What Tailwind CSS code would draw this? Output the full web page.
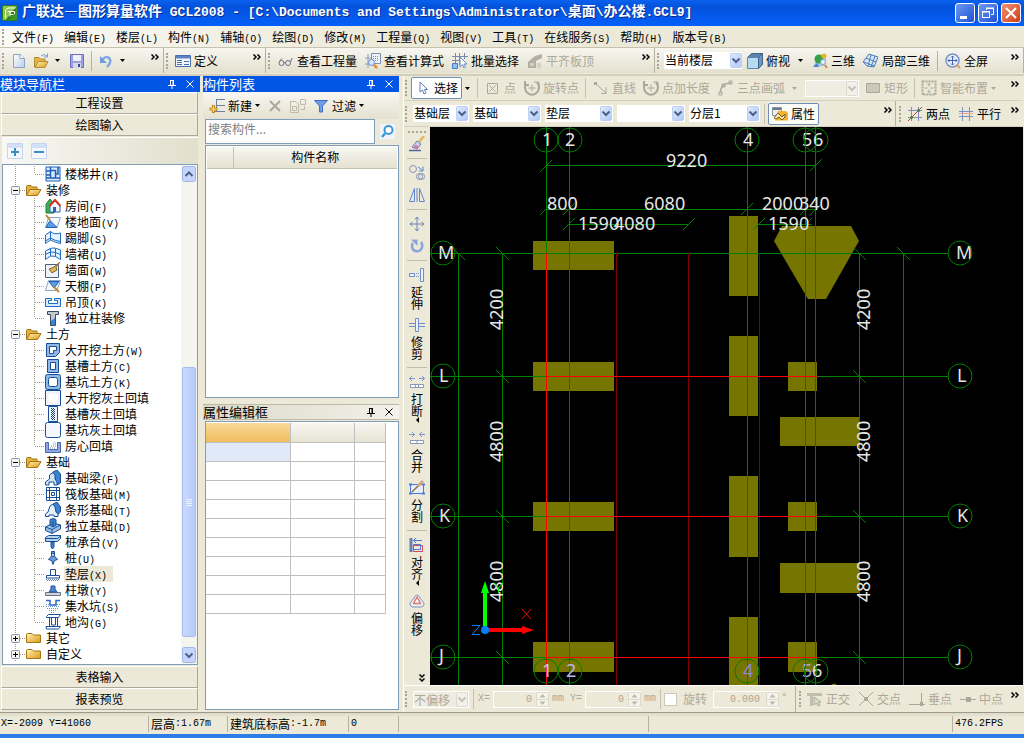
<!DOCTYPE html>
<html lang="zh-CN">
<head>
<meta charset="utf-8">
<title>广联达—图形算量软件 GCL2008</title>
<script src="https://cdn.jsdelivr.net/npm/@tailwindcss/browser@4"></script>
</head>
<body class="flex h-screen flex-col overflow-hidden bg-[#ece9d8] font-['Noto_Sans_CJK_SC',sans-serif] text-xs leading-4 whitespace-nowrap text-black [&_small]:font-['Liberation_Mono',monospace] [&_small]:text-[10px] [&_small]:leading-none [&_svg]:shrink-0">

<!-- Shared glyphs -->
<svg class="absolute size-0" aria-hidden="true">
  <defs>
    <linearGradient id="folderFill" x2="1" y2="1"><stop stop-color="#fff3b0"/><stop offset="1" stop-color="#d99a1c"/></linearGradient>
    <linearGradient id="paper" x2="1" y2="1"><stop stop-color="#fff"/><stop offset="1" stop-color="#b9cdea"/></linearGradient>
    <linearGradient id="arrowBox" y2="1" x2="1"><stop stop-color="#e1eafe"/><stop offset="1" stop-color="#aec8f7"/></linearGradient>
    <g id="branch" fill="none" stroke="#a09c84" stroke-dasharray="1 1"><path d="M15.500 0V16M34.500 0V16M35 8.500H45"/></g>
    <g id="branchEnd" fill="none" stroke="#a09c84" stroke-dasharray="1 1"><path d="M15.500 0V16M34.500 0V8M35 8.500H45"/></g>
    <g id="boxLine"><path d="M15.500 0V16M20 8.500H26" fill="none" stroke="#a09c84" stroke-dasharray="1 1"/><rect x="11.500" y="4.500" width="8" height="8" rx="1" fill="#f6f5ef" stroke="#7898b5"/><path d="M13 8.500H18" stroke="#000"/></g>
    <g id="folderOpen"><path d="M29.500 13V4.500q0-1 1-1H34l1.500 1.500H40v3" fill="#e0b040" stroke="#a87412"/><path d="M29.500 13.500 33 7.500H44L40.500 13.500Z" fill="url(#folderFill)" stroke="#a87412"/></g>
    <g id="folderShut"><path d="M29.500 12.500V4.500q0-1 1-1H35l1.500 1.500H43.500V12.500Z" fill="url(#folderFill)" stroke="#a87412"/></g>
    <g id="nodeOpen"><use href="#boxLine"/><use href="#folderOpen" x="-3"/></g>
    <g id="nodeShut"><use href="#boxLine"/><path d="M15.500 6V11" stroke="#000"/><use href="#folderShut" x="-3"/></g>
    <g id="caret"><path d="M0 0H5L2.500 3Z" fill="currentColor"/></g>
    <g id="more" fill="none" stroke="currentColor" stroke-width="1.500"><path d="M0.500 0.500 3 3 0.500 5.500M4.500 0.500 7 3 4.500 5.500"/></g>
    <g id="drop"><rect x="0.500" y="0.500" width="11" height="14" rx="1" fill="url(#arrowBox)" stroke="#bccff5"/><path d="M2.500 5.500 6 9 9.500 5.500" fill="none" stroke="#4d6185" stroke-width="2"/></g>
    <g id="dropOff"><rect x="0.500" y="0.500" width="11" height="14" rx="1" fill="#f2f1ea" stroke="#dddacb"/><path d="M2.500 5.500 6 9 9.500 5.500" fill="none" stroke="#c5c2b2" stroke-width="2"/></g>
    <g id="spin"><path d="M0.500 0.500H12.500V14.500H0.500ZM0.500 7.500H12.500" fill="#f4f3ec" stroke="#dddacb"/><path d="M3.500 5.500 6.500 2 9.500 5.500ZM3.500 9.500 6.500 13 9.500 9.500Z" fill="#bdbaa9"/></g>
    <g id="pin" fill="none" stroke="currentColor"><path d="M2 0.500H6M2.500 0V5M5.500 0V5M0 5.500H8M4 6V9"/><path d="M5 0V5"/></g>
    <g id="cross" stroke="currentColor"><path d="M0.500 0.500 7.500 7.500M7.500 0.500 0.500 7.500"/></g>
  </defs>
</svg>

<!-- Title bar -->
<header class="flex h-[26px] items-center bg-linear-to-b from-[#0a62ee] via-[#0452dc] via-25% to-[#0460fa] pr-[3px] pl-[2px] text-white">
  <svg class="size-4" viewBox="0 0 16 16"><rect width="16" height="16" rx="2" fill="#2f7a1c"/><path d="M1 1H15L9 8 4 15H1Z" fill="#8cc850"/><path d="M15 1V15H6Q13 10 15 1Z" fill="#3f9428"/><path d="M3.500 13V5L6 3H13.500M5.500 6.500H12.500V9M8 6V9.500H11.500M8 9V11.500" fill="none" stroke="#fff"/></svg>
  <h1 class="ml-1 flex-1 pb-[3px] font-['Liberation_Mono','Noto_Sans_CJK_SC',monospace] text-[13px] leading-5 font-bold [text-shadow:1px_1px_0_#0a2a8c]"><span class="font-['Noto_Sans_CJK_SC'] text-sm">广联达—图形算量软件</span> GCL2008 - [C:\Documents and Settings\Administrator\<span class="text-sm">桌面</span>\<span class="text-sm">办公楼</span>.GCL9]</h1>
  <div class="flex gap-[3px] [&>button]:size-5 [&>button]:rounded-[3px] [&>button]:border [&>button]:border-white [&_svg]:size-[18px]">
    <button aria-label="最小化" class="bg-linear-to-br from-[#6f98f2] to-[#1c4fd6]"><svg viewBox="0 0 18 18"><path d="M4 12H11V15H4Z" fill="#fff"/></svg></button>
    <button aria-label="还原" class="bg-linear-to-br from-[#6f98f2] to-[#1c4fd6]"><svg viewBox="0 0 18 18" fill="none" stroke="#fff"><path d="M7.500 6V4.500H14.500V10.500H12M7 4H15M3.500 7.500H10.500V13.500H3.500ZM3 8H11"/></svg></button>
    <button aria-label="关闭" class="bg-linear-to-br from-[#ee8f70] to-[#cf3a12]"><svg viewBox="0 0 18 18" fill="none" stroke="#fff" stroke-width="2"><path d="M4 4 14 14M14 4 4 14"/></svg></button>
  </div>
</header>

<!-- Menu bar -->
<nav class="flex h-[22px] items-center gap-[10px] border-b border-[#c5c2b0] bg-linear-to-r from-[#faf9f5] to-[#ece9d8] to-40% pl-[2px]">
  <span class="-mr-[2px] h-4 border-l-2 border-dotted border-[#a8a797]"></span>
  <button>文件<small>(F)</small></button><button>编辑<small>(E)</small></button><button>楼层<small>(L)</small></button><button>构件<small>(N)</small></button><button>辅轴<small>(O)</small></button><button>绘图<small>(D)</small></button><button>修改<small>(M)</small></button><button>工程量<small>(Q)</small></button><button>视图<small>(V)</small></button><button>工具<small>(T)</small></button><button>在线服务<small>(S)</small></button><button>帮助<small>(H)</small></button><button>版本号<small>(B)</small></button>
</nav>

<!-- Main toolbar -->
<div class="flex h-7 border-b-2 border-b-[#d2cfbe] pb-px [&_button]:flex [&_button]:items-center [&_button]:gap-[3px] [&>div]:flex [&>div]:items-center [&>div]:border-r [&>div]:border-[#b5b2a0] [&>div]:bg-linear-to-b [&>div]:from-[#f7f6f0] [&>div]:to-[#e4e1cf] [&>div]:pl-[2px]">
  <div class="w-[164px] pr-1">
    <span class="mr-[7px] h-4 border-l-2 border-dotted border-[#a8a797]"></span>
    <button aria-label="新建"><svg class="size-4" viewBox="0 0 16 16"><path d="M2.500 1.500H9L13.500 5.500V14.500H2.500Z" fill="url(#paper)" stroke="#8fa4c4"/><path d="M9 1.500V5.500H13.500" fill="#fff" stroke="#8fa4c4"/></svg></button>
    <button aria-label="打开" class="ml-[6px]"><svg class="size-4" viewBox="0 0 16 16"><path d="M1.500 14V4.500H6L7.500 6H12V8" fill="#e5b64c" stroke="#b68a2a"/><path d="M2 14.500 5 8.500H15L12 14.500Z" fill="url(#folderFill)" stroke="#b68a2a"/><path d="M8 3Q11 0 14 3M14.500 0.500V4H11" fill="none" stroke="#7e9ac6"/></svg><svg class="ml-[3px] h-[3px] w-[5px]"><use href="#caret"/></svg></button>
    <button aria-label="保存" class="ml-[9px]"><svg class="size-4" viewBox="0 0 16 16"><path d="M1.500 1.500H14.500V14.500H1.500Z" fill="#9aa0e0" stroke="#6a72c0"/><path d="M4 2H12V8H4Z" fill="#eef1fc"/><path d="M4 10H12V15H4Z" fill="#d6d8e6"/><path d="M9 11H11V14H9Z" fill="#404890"/></svg></button>
    <span class="mx-[6px] h-5 w-px bg-[#b5b2a0]"></span>
    <button aria-label="撤销"><svg class="size-4" viewBox="0 0 16 16"><path d="M4 7Q8 2 11.500 5.500Q14 9 9 14" fill="none" stroke="#7fa8e6" stroke-width="2.500"/><path d="M2 3V10H9Z" fill="#6f9be0"/></svg><svg class="ml-[3px] h-[3px] w-[5px]"><use href="#caret"/></svg></button>
    <button aria-label="更多" class="mb-2 ml-auto"><svg class="h-[6px] w-2"><use href="#more"/></svg></button>
  </div>
  <div class="w-[102px] pr-1">
    <span class="mr-[7px] h-4 border-l-2 border-dotted border-[#a8a797]"></span>
    <button><svg class="size-4" viewBox="0 0 16 16"><path d="M0.500 2.500H15.500V13.500H0.500Z" fill="#f3f7fd" stroke="#4a6fae"/><path d="M1 3H15V5.500H1Z" fill="#5c83c6"/><path d="M2 7.500H7M2 9.500H7M2 11.500H7M9 8.500H14M9 11.500H14" stroke="#4a6fae"/></svg>定义</button>
    <button aria-label="更多" class="mb-2 ml-auto"><svg class="h-[6px] w-2"><use href="#more"/></svg></button>
  </div>
  <div class="w-[389px] gap-[8px] pr-1">
    <span class="h-4 border-l-2 border-dotted border-[#a8a797]"></span>
    <button><svg class="size-4" viewBox="0 0 16 16" fill="none" stroke="#66708a"><circle cx="3.500" cy="10" r="2.500"/><circle cx="10" cy="10" r="2.500"/><path d="M6 9.500H7.500M1.500 8.500 4 5.500M12.500 9 14 5"/></svg>查看工程量</button>
    <button><svg class="size-4" viewBox="0 0 16 16"><path d="M0 5H7M0 11H6M3 1V15" stroke="#8a9cbc"/><path d="M6.500 0.500H15.500V10.500H6.500Z" fill="#eef2fa" stroke="#7d8fb0"/><path d="M8 3.500H14M8 5.500H14M8 7.500H14" stroke="#7d8fb0" stroke-dasharray="1 1"/><circle cx="6.500" cy="9.500" r="3" fill="#d5e6fb" stroke="#6b8cc4"/><path d="M9 12 12 15" stroke="#e09030" stroke-width="2.500"/></svg>查看计算式</button>
    <button><svg class="size-4" viewBox="0 0 16 16"><path d="M0 3.500H16M0 7.500H11M3.500 0V16M7.500 0V12M12.500 0V6" stroke="#7b8aa6"/><path d="M0.500 10.500H5.500V15.500H0.500Z" fill="#8cc0f4" stroke="#4b7cc0"/><path d="M8 4V14L10.500 11.500 12 15 13.500 14 12 11H15Z" fill="#fff" stroke="#6b8cc4"/></svg>批量选择</button>
    <button disabled class="text-[#aca899]"><svg class="size-4" viewBox="0 0 16 16"><path d="M1 9 8 3 15 1V5L9 8V15H1Z" fill="#b3b0a2"/><path d="M3 10H7V13H3ZM10 10H14V15H10Z" fill="#d4d1c3"/></svg>平齐板顶</button>
    <button aria-label="更多" class="mb-2 ml-auto"><svg class="h-[6px] w-2"><use href="#more"/></svg></button>
  </div>
  <div class="min-w-0 flex-1 pr-1">
    <span class="mr-[5px] h-4 border-l-2 border-dotted border-[#a8a797]"></span>
    <span class="relative flex w-[78px]"><select aria-label="楼层范围" class="h-[17px] w-full appearance-none bg-white pb-px pl-px"><option>当前楼层</option></select><svg class="pointer-events-none absolute top-px right-0 h-[15px] w-3"><use href="#drop"/></svg></span>
    <button class="ml-[5px]"><svg class="size-4" viewBox="0 0 16 16"><path d="M0.500 4.500 4.500 0.500H15.500L11.500 4.500Z" fill="#5f82aa" stroke="#41658f"/><path d="M0.500 4.500H11.500V15.500H0.500Z" fill="#b7daf2" stroke="#5f87b0"/><path d="M11.500 4.500 15.500 0.500V11.500L11.500 15.500Z" fill="#6c95bf" stroke="#41658f"/></svg>俯视<svg class="ml-[5px] h-[3px] w-[5px]"><use href="#caret"/></svg></button>
    <button class="ml-[9px]"><svg class="size-4" viewBox="0 0 16 16"><path d="M1 14 4 7 14 5 13 13Z" fill="#a9c3dc"/><circle cx="7" cy="6" r="4.500" fill="#35a045"/><circle cx="12" cy="3" r="2.500" fill="#e3b62b"/><path d="M1 14H7L5 10Z" fill="#4b83d8"/><circle cx="11" cy="9" r="2.500" fill="#e9f3fb" stroke="#7fa5c8"/><path d="M13 12 15 15" stroke="#d88b30" stroke-width="2"/></svg>三维</button>
    <button class="ml-2"><svg class="size-4" viewBox="0 0 16 16"><path d="M0 9 6 1 15 4 11 14 4 13Z" fill="#d6e6f5" stroke="#4e7db4"/><path d="M3 5 13 9M8 2 5 13M12 3 8 14M1 9 11 13" stroke="#4e7db4"/></svg>局部三维</button>
    <span class="mx-[7px] h-5 w-px bg-[#b5b2a0]"></span>
    <button><svg class="size-4" viewBox="0 0 16 16"><circle cx="7.500" cy="7.500" r="6.500" fill="#e8effa" stroke="#7e95c2" stroke-width="1.500"/><path d="M7.500 3V12M3 7.500H12M6 4.500 7.500 3 9 4.500M6 10.500 7.500 12 9 10.500M4.500 6 3 7.500 4.500 9M10.500 6 12 7.500 10.500 9" fill="none" stroke="#4468b0"/><path d="M12 12 15 15" stroke="#e0a050" stroke-width="2"/></svg>全屏</button>
    <button aria-label="更多" class="mb-2 ml-auto"><svg class="h-[6px] w-2"><use href="#more"/></svg></button>
  </div>
</div>

<main class="flex min-h-0 flex-1">

  <!-- Module navigator -->
  <aside class="mr-[3px] flex w-[200px] flex-col">
    <h2 class="flex h-4 items-center bg-[#0355e6] pr-[6px] text-[13px] text-white"><span class="flex-1">模块导航栏</span>
      <button aria-label="固定"><svg class="block h-[9px] w-2"><use href="#pin"/></svg></button><button aria-label="关闭导航栏" class="ml-[10px]"><svg class="block size-2"><use href="#cross"/></svg></button></h2>
    <div class="flex min-h-0 flex-1 flex-col pr-[2px] pb-[2px] pl-px [&>button]:h-[22px] [&>button]:shrink-0 [&>button]:border [&>button]:border-[#aca899] [&>button]:border-t-white [&>button]:border-l-white">
      <button>工程设置</button>
      <button>绘图输入</button>
      <div class="mt-px ml-px flex h-[27px] shrink-0 items-center gap-2 border-t border-white bg-linear-to-r from-[#f8f8f5] to-[#e2dfcc] pl-[5px]">
        <button aria-label="全部展开"><svg class="block size-4" viewBox="0 0 16 16"><path d="M0.500 0.500H15.500V15.500H0.500Z" fill="#f4f7fc" stroke="#c6d6f2"/><path d="M1 1H15V5H1Z" fill="#d4e0f8"/><path d="M8 5V13M4 9H12" stroke="#3b8dc0" stroke-width="2"/></svg></button>
        <button aria-label="全部折叠"><svg class="block size-4" viewBox="0 0 16 16"><path d="M0.500 0.500H15.500V15.500H0.500Z" fill="#f4f7fc" stroke="#c6d6f2"/><path d="M1 1H15V5H1Z" fill="#d4e0f8"/><path d="M3 9H13" stroke="#3b8dc0" stroke-width="2"/></svg></button>
      </div>
      <div class="ml-px flex min-h-0 flex-1 border border-[#7f9db9] bg-white">
        <ul class="min-w-0 flex-1 overflow-hidden pt-px [&_li]:flex [&_li]:h-4 [&_li]:items-center [&_li>svg]:size-4 [&_li>svg:first-child]:w-[42px] [&_a]:ml-[3px] [&_a]:px-px">
          <li><svg viewBox="3 0 42 16"><use href="#branchEnd"/></svg><svg viewBox="0 0 16 16"><path d="M1 1H15V15H1Z" fill="#dbe9fb" stroke="#1b5fb8"/><path d="M1 5H5M1 9H5M1 12H15M5.500 1V12M10.500 4V12M10.500 4.500H5M13 1V8H10" fill="none" stroke="#1b5fb8" stroke-width="1.500"/></svg><a href="#">楼梯井<small>(R)</small></a></li>
          <li><svg viewBox="3 0 42 16"><use href="#nodeOpen"/></svg><a href="#" class="ml-0!">装修</a></li>
          <li><svg viewBox="3 0 42 16"><use href="#branch"/></svg><svg viewBox="0 0 16 16"><path d="M1 6 5 1 9 6V15H1Z" fill="#3fae5c" stroke="#1d7c3a"/><path d="M5 8 10 3 15 8V14H5Z" fill="#f2f7ff" stroke="#2a66b0"/><path d="M4.500 8 10 2 15.500 8" fill="none" stroke="#d53320" stroke-width="2"/><path d="M8 9H11V14H8Z" fill="#2a66b0"/></svg><a href="#">房间<small>(F)</small></a></li>
          <li><svg viewBox="3 0 42 16"><use href="#branch"/></svg><svg viewBox="0 0 16 16"><path d="M3.500 3.500H15.500L12 13.500H0.500Z" fill="#f4f8fd" stroke="#8ba6c4"/><path d="M5 6.500 12 13.500H1Z" fill="#5c9ce4" stroke="#1b5fb8"/><path d="M1 1 5 6" stroke="#c48a2a" stroke-width="2"/></svg><a href="#">楼地面<small>(V)</small></a></li>
          <li><svg viewBox="3 0 42 16"><use href="#branch"/></svg><svg viewBox="0 0 16 16" fill="#e6f2fd" stroke="#1b6cc4"><path d="M0.500 5 5.500 1.500V10L0.500 13.500ZM5.500 1.500Q9 5 15.500 3V13.500Q10 12.500 5.500 10Z"/><path d="M0.500 11 5.500 8Q10 11 15.500 11.500" fill="none"/></svg><a href="#">踢脚<small>(S)</small></a></li>
          <li><svg viewBox="3 0 42 16"><use href="#branch"/></svg><svg viewBox="0 0 16 16" fill="#e6f2fd" stroke="#1b6cc4"><path d="M0.500 5 5.500 2.500V10L0.500 13.500ZM5.500 2.500Q9 1 15.500 4V13.500Q10 9 5.500 10Z"/><path d="M0.500 8.500 5.500 6Q10 5.500 15.500 8.500M10.500 2.500V10.500" fill="none"/></svg><a href="#">墙裙<small>(U)</small></a></li>
          <li><svg viewBox="3 0 42 16"><use href="#branch"/></svg><svg viewBox="0 0 16 16"><path d="M0.500 2.500H13.500V15.500H0.500Z" fill="#f0f4fa" stroke="#4a6288"/><path d="M15 0 11 5 12 8 7 11 4 7 9 5Z" fill="#d9b560" stroke="#8a6420"/></svg><a href="#">墙面<small>(W)</small></a></li>
          <li><svg viewBox="3 0 42 16"><use href="#branch"/></svg><svg viewBox="0 0 16 16"><path d="M3.500 2.500H15.500L12 12.500H0.500Z" fill="#f4f8fd" stroke="#8ba6c4"/><path d="M4 3.500H14L9 10Z" fill="#5c9ce4" stroke="#1b5fb8"/><path d="M9 9 14 14" stroke="#c48a2a" stroke-width="2"/></svg><a href="#">天棚<small>(P)</small></a></li>
          <li><svg viewBox="3 0 42 16"><use href="#branch"/></svg><svg viewBox="0 0 16 16"><path d="M0.500 4.500H6.500V6.500H3.500V9.500H12.500V6.500H9.500V4.500H15.500V12.500H0.500Z" fill="#d8eafb" stroke="#1b6cc4"/></svg><a href="#">吊顶<small>(K)</small></a></li>
          <li><svg viewBox="3 0 42 16"><use href="#branchEnd"/></svg><svg viewBox="0 0 16 16"><path d="M2.500 1.500H13.500V4.500H10.500V15.500H5.500V4.500H2.500Z" fill="#c3c8d0" stroke="#3e4b5e"/><path d="M6 15 6 11 10 8V15Z" fill="#3b82d8"/></svg><a href="#">独立柱装修</a></li>
          <li><svg viewBox="3 0 42 16"><use href="#nodeOpen"/></svg><a href="#" class="ml-0!">土方</a></li>
          <li><svg viewBox="3 0 42 16"><use href="#branch"/></svg><svg viewBox="0 0 16 16" stroke="#174f96"><path d="M1.500 1.500H14.500V10.500L10.500 14.500H1.500Z" fill="#8fb8e6"/><path d="M4.500 4.500H11.500V8.500H8.500V11.500H4.500Z" fill="#fff"/></svg><a href="#">大开挖土方<small>(W)</small></a></li>
          <li><svg viewBox="3 0 42 16"><use href="#branch"/></svg><svg viewBox="0 0 16 16" stroke="#174f96"><path d="M2.500 1.500H13.500V14.500H2.500Z" fill="#8fb8e6"/><path d="M5.500 4.500H10.500V11.500H5.500Z" fill="#fff"/></svg><a href="#">基槽土方<small>(C)</small></a></li>
          <li><svg viewBox="3 0 42 16"><use href="#branch"/></svg><svg viewBox="0 0 16 16" stroke="#174f96"><rect x="0.500" y="0.500" width="15" height="15" rx="2" fill="#8fb8e6"/><rect x="3.500" y="3.500" width="9" height="9" rx="2" fill="#fff"/></svg><a href="#">基坑土方<small>(K)</small></a></li>
          <li><svg viewBox="3 0 42 16"><use href="#branch"/></svg><svg viewBox="0 0 16 16" stroke="#174f96"><path d="M0.500 0.500H15.500V15.500H0.500Z" fill="#f1f5ff"/><path d="M3 3H13V13H3Z" fill="#fff" stroke="#dbe4f8" stroke-dasharray="1 1"/></svg><a href="#">大开挖灰土回填</a></li>
          <li><svg viewBox="3 0 42 16"><use href="#branch"/></svg><svg viewBox="0 0 16 16"><path d="M3.500 0.500H12.500V15.500H3.500Z" fill="#eef3fb" stroke="#174f96"/><path d="M6.500 2V14M7.500 3V15M8.500 2V14M9.500 3V15" stroke="#20406c" stroke-dasharray="1 1"/></svg><a href="#">基槽灰土回填</a></li>
          <li><svg viewBox="3 0 42 16"><use href="#branch"/></svg><svg viewBox="0 0 16 16"><rect x="0.500" y="0.500" width="15" height="15" rx="2" fill="#f4f7ff" stroke="#174f96"/></svg><a href="#">基坑灰土回填</a></li>
          <li><svg viewBox="3 0 42 16"><use href="#branchEnd"/></svg><svg viewBox="0 0 16 16"><path d="M0.500 4.500H3.500V11.500H12.500V4.500H15.500V14.500H0.500Z" fill="#8da6dc" stroke="#4a67b0"/><path d="M5 10H11M6 8H11M8 6H11M9 4H11" stroke="#7e93bc" stroke-dasharray="1 1"/></svg><a href="#">房心回填</a></li>
          <li><svg viewBox="3 0 42 16"><use href="#nodeOpen"/></svg><a href="#" class="ml-0!">基础</a></li>
          <li><svg viewBox="3 0 42 16"><use href="#branch"/></svg><svg viewBox="0 0 16 16" stroke="#174f96"><path d="M8 2 12 0 15.500 4V13L12 15Z" fill="#3c82cc"/><path d="M0.500 15V12L4.500 9V5L8 2.500 10 5V9L12 12V15H9V12H4V15Z" fill="#cfe2f6"/></svg><a href="#">基础梁<small>(F)</small></a></li>
          <li><svg viewBox="3 0 42 16"><use href="#branch"/></svg><svg viewBox="0 0 16 16" fill="none" stroke="#174f96"><path d="M1.500 1.500H14.500V14.500H1.500ZM4.500 1V15M11.500 1V15M1 4.500H15M1 11.500H15M6.500 6.500H9.500V9.500H6.500Z"/></svg><a href="#">筏板基础<small>(M)</small></a></li>
          <li><svg viewBox="3 0 42 16"><use href="#branch"/></svg><svg viewBox="0 0 16 16" stroke="#174f96"><path d="M8 2 12 0 15.500 5V10L12 13Z" fill="#3c82cc"/><path d="M0.500 14.500V12L3 10 5 4 8 2 10 5 11 10 13 12V14.500H9V13H4V14.500Z" fill="#e5f0fb"/></svg><a href="#">条形基础<small>(T)</small></a></li>
          <li><svg viewBox="3 0 42 16"><use href="#branch"/></svg><svg viewBox="0 0 16 16" stroke="#174f96"><path d="M0.500 9 8 5 15.500 7V11L7 15.500 0.500 12.500Z" fill="#9cc0e8"/><path d="M0.500 9 7 11.500 15.500 7M7 11.500V15" fill="none"/><path d="M5 1.500 8 0.500 11 1.500V7L8 9 5 7ZM8 3V9" fill="#3c82cc"/></svg><a href="#">独立基础<small>(D)</small></a></li>
          <li><svg viewBox="3 0 42 16"><use href="#branch"/></svg><svg viewBox="0 0 16 16" stroke="#174f96"><path d="M0.500 3.500 3.500 1.500H15.500V4.500L12.500 7.500H0.500Z" fill="#b8d3f0"/><path d="M0.500 4.500H12.500L15.500 2" fill="none"/><path d="M6 8H9V13L7.500 15 6 13Z" fill="#3c82cc"/></svg><a href="#">桩承台<small>(V)</small></a></li>
          <li><svg viewBox="3 0 42 16"><use href="#branch"/></svg><svg viewBox="0 0 16 16" stroke="#174f96"><path d="M6.500 1.500H9.500V6L12.500 9.500 9.500 10.500 8 14.500 6.500 10.500 3.500 9.500 6.500 6Z" fill="#6a9bd4"/><circle cx="8" cy="5" r="1.500" fill="#fff"/></svg><a href="#">桩<small>(U)</small></a></li>
          <li><svg viewBox="3 0 42 16"><use href="#branch"/></svg><svg viewBox="0 0 16 16"><path d="M5.500 9V3.500H10.500V9M1.500 12V9.500H14.500V12" fill="#fff" stroke="#174f96"/><path d="M1 12H15" stroke="#174f96"/><path d="M1 13.500H15M2 14.500H14" stroke="#7388a8" stroke-dasharray="1 1"/></svg><a href="#" class="bg-[#ece9d8] pr-[6px]!">垫层<small>(X)</small></a></li>
          <li><svg viewBox="3 0 42 16"><use href="#branch"/></svg><svg viewBox="0 0 16 16"><path d="M0.500 10.500H15.500V13.500H0.500Z" fill="#d0d3da" stroke="#6b7280"/><path d="M4 10 6 7V4H10V7L12 10Z" fill="#4c86d8" stroke="#2a4fa0"/></svg><a href="#">柱墩<small>(Y)</small></a></li>
          <li><svg viewBox="3 0 42 16"><use href="#branch"/></svg><svg viewBox="0 0 16 16"><path d="M1 2.500H5V7H11V2.500H15" fill="none" stroke="#2a6cc4" stroke-width="1.500"/><path d="M1 6.500H4M12 6.500H15M1 8.500H15M2 10.500H14M4 12.500H12M6 14.500H10" stroke="#6a94d0" stroke-dasharray="1 1"/></svg><a href="#">集水坑<small>(S)</small></a></li>
          <li><svg viewBox="3 0 42 16"><use href="#branchEnd"/></svg><svg viewBox="0 0 16 16" fill="none" stroke="#174f96"><path d="M1.500 2.500 3.500 0.500H15.500L13.500 3.500H1.500ZM4.500 4V13M12.500 4V13M6.500 4V11H10.500V4M1 12.500H15.500L13.500 15H1.500Z"/></svg><a href="#">地沟<small>(G)</small></a></li>
          <li><svg viewBox="3 0 42 16"><use href="#nodeShut"/></svg><a href="#" class="ml-0!">其它</a></li>
          <li><svg viewBox="3 0 42 16"><use href="#nodeShut"/></svg><a href="#" class="ml-0!">自定义</a></li>
        </ul>
        <div class="flex w-4 flex-col items-center bg-[#f5f5f0] py-px" aria-hidden="true">
          <svg class="size-4" viewBox="0 0 16 16"><rect x="1.500" y="0.500" width="13" height="15" rx="2" fill="#c6d5fd" stroke="#9fb5e8"/><path d="M4.500 10 8 6.500 11.500 10" fill="none" stroke="#4d6185" stroke-width="2"/></svg>
          <span class="h-[185px]"></span>
          <span class="flex min-h-0 w-[14px] flex-1 flex-col items-center justify-center gap-px rounded-xs border border-[#a9bdec] bg-linear-to-r from-[#c9d8fd] to-[#b7cafa] [&>i]:h-px [&>i]:w-[6px] [&>i]:bg-[#eef4fe]"><i></i><i></i><i></i><i></i></span>
          <span class="h-[10px]"></span>
          <svg class="size-4" viewBox="0 0 16 16"><rect x="1.500" y="0.500" width="13" height="15" rx="2" fill="#c6d5fd" stroke="#9fb5e8"/><path d="M4.500 6.500 8 10 11.500 6.500" fill="none" stroke="#4d6185" stroke-width="2"/></svg>
        </div>
      </div>
      <button class="mt-px">表格输入</button>
      <button>报表预览</button>
    </div>
  </aside>

  <!-- Component list and property editor -->
  <section class="flex w-[200px] flex-col pr-1">
    <h2 class="flex h-4 items-center bg-[#0355e6] pr-[6px] text-[13px] text-white"><span class="flex-1">构件列表</span>
      <button aria-label="固定"><svg class="block h-[9px] w-2"><use href="#pin"/></svg></button><button aria-label="关闭构件列表" class="ml-[10px]"><svg class="block size-2"><use href="#cross"/></svg></button></h2>
    <div class="flex h-[27px] items-center bg-linear-to-b from-[#f8f7f2] to-[#e4e1cf] pl-[6px] [&>button]:flex [&>button]:items-center [&>button]:gap-[3px]">
      <button><svg class="size-4" viewBox="0 0 16 16"><path d="M7 1.500H16M7 7.500H16M5 13.500H16M7.500 1V13" fill="none" stroke="#6b7f9e"/><path d="M4.500 7V15M0.500 11H8.500" stroke="#c58a1a" stroke-width="3"/><path d="M4.500 8V14M1.500 11H7.500" stroke="#fbe08a"/></svg>新建<svg class="h-[3px] w-[5px]"><use href="#caret"/></svg></button>
      <button aria-label="删除" disabled class="ml-2 text-[#aca899]"><svg class="size-[14px]" viewBox="0 0 14 14"><path d="M2 2 12 12M12 2 2 12" stroke="currentColor" stroke-width="2"/></svg></button>
      <button aria-label="复制" disabled class="ml-2 text-[#bdbaa9]"><svg class="size-4" viewBox="0 0 16 16" fill="none" stroke="currentColor"><path d="M0.500 3.500H6L8.500 6V14.500H0.500ZM2.500 8.500H6.500V12.500H2.500ZM10.500 1.500H15.500V6.500H10.500ZM14.500 8V11.500H10.500"/></svg></button>
      <button class="ml-2"><svg class="size-[14px]" viewBox="0 0 14 14"><path d="M0.500 1.500H13.500L8.500 7V13H5.500V7Z" fill="#6f9ee8" stroke="#3f6fc4"/></svg><span class="ml-px">过滤</span><svg class="h-[3px] w-[5px]"><use href="#caret"/></svg></button>
    </div>
    <div class="ml-[2px] flex h-[25px] gap-[5px]">
      <input aria-label="搜索构件" placeholder="搜索构件..." class="min-w-0 flex-1 border border-[#7f9db9] bg-white px-[2px] pb-[5px] placeholder:text-[#808080]">
      <button aria-label="搜索" class="my-auto mr-1"><svg class="block size-[15px]" viewBox="0 0 15 15"><path d="M0 0H15V15H0Z" fill="#eef4fa"/><circle cx="8.500" cy="6" r="4" fill="#fff" stroke="#3a97d8" stroke-width="2"/><path d="M5 9.500 2 13" stroke="#3a97d8" stroke-width="2.500"/></svg></button>
    </div>
    <div class="mt-px ml-[2px] h-[253px] border border-[#7f9db9] bg-white p-px">
      <table class="w-full border-collapse"><thead><tr class="h-[21px] bg-linear-to-b from-[#f8f7f2] to-[#e4e1d0] [&>th]:border-b [&>th]:border-[#c5c2b0] [&>th]:font-normal"><th class="w-[26px] border-r"></th><th>构件名称</th></tr></thead></table>
    </div>
    <h2 class="mt-[6px] flex h-4 items-center border-y border-[#bcb9a8] bg-linear-to-r from-[#dcd9c7] to-[#f2f1ea] pr-[6px] text-[13px]"><span class="flex-1">属性编辑框</span>
      <button aria-label="固定"><svg class="block h-[9px] w-2"><use href="#pin"/></svg></button><button aria-label="关闭属性编辑框" class="ml-[10px]"><svg class="block size-2"><use href="#cross"/></svg></button></h2>
    <div class="mt-px mb-[2px] ml-[2px] min-h-0 flex-1 border border-[#7f9db9] bg-white pt-px">
      <table class="w-[180px] table-fixed border-collapse [&_td]:h-[19px] [&_td]:border [&_td]:border-t-0 [&_td]:border-l-0 [&_td]:border-[#c0c0c0] [&_td]:p-0">
        <colgroup><col class="w-[84px]"><col class="w-16"><col></colgroup>
        <tbody>
          <tr class="bg-linear-to-b from-[#f8f7f2] to-[#e6e3d2]"><td class="bg-linear-to-b from-[#f9d99a] to-[#efbd5c]"></td><td></td><td></td></tr>
          <tr><td class="bg-[#dfe9f7]"></td><td></td><td></td></tr>
          <tr><td></td><td></td><td></td></tr><tr><td></td><td></td><td></td></tr><tr><td></td><td></td><td></td></tr><tr><td></td><td></td><td></td></tr><tr><td></td><td></td><td></td></tr><tr><td></td><td></td><td></td></tr><tr><td></td><td></td><td></td></tr><tr><td></td><td></td><td></td></tr>
        </tbody>
      </table>
    </div>
  </section>

  <!-- Drawing workspace -->
  <section class="flex min-w-0 flex-1 flex-col border-l border-white pr-px">
    <div class="flex h-[25px] shrink-0 items-center border-b border-[#d5d2c2] pr-1 pl-px text-[#aca899] [&>button]:flex [&>button]:items-center [&>button]:gap-[3px]">
      <span class="mr-1 h-4 border-l-2 border-dotted border-[#a8a797]"></span>
      <button class="h-[22px] w-[51px] rounded-xs border border-[#6f8fb5] bg-white pl-[3px] text-black"><svg class="size-4" viewBox="0 0 16 16"><path d="M5 2V12L7.500 10 9 14 11 13 9.500 9.500H12.500Z" fill="#fff" stroke="#5f7fb5"/></svg>选择</button>
      <button aria-label="选择方式" class="ml-[3px] text-black"><svg class="h-[3px] w-[5px]"><use href="#caret"/></svg></button>
      <span class="mx-[7px] h-5 w-px bg-[#c5c2b0]"></span>
      <button disabled><svg class="size-4" viewBox="0 0 16 16" fill="none" stroke="currentColor"><path d="M2.500 3.500H12.500V13.500H2.500ZM4.500 5.500 10.500 11.500M10.500 5.500 4.500 11.500"/></svg>点</button>
      <button disabled class="ml-2"><svg class="size-4" viewBox="0 0 16 16" fill="none" stroke="currentColor"><path d="M1 1V5H5M1.500 5Q0 9 3 12.500Q8 17 13 12.500Q17 7 13 2.500" stroke-width="2"/><path d="M10 2H15V7M8 4.500V11.500M4.500 8H11.500"/></svg>旋转点</button>
      <span class="mx-[6px] h-5 w-px bg-[#c5c2b0]"></span>
      <button disabled class="ml-px"><svg class="size-4" viewBox="0 0 16 16" stroke="currentColor" fill="currentColor"><path d="M2 3 13 13M13 7V13.500H8"  fill="none"/><path d="M1 2H4V5H1Z" stroke="none"/></svg>直线</button>
      <button disabled class="ml-[7px]"><svg class="size-4" viewBox="0 0 16 16" fill="none" stroke="currentColor"><path d="M1 1V5H5M1.500 5Q0 9 3 12.500Q8 17 13 12.500Q17 7 13 2.500" stroke-width="2"/><path d="M10 2H15V7M8 4.500V11.500M4.500 8H11.500"/></svg>点加长度</button>
      <button disabled class="ml-2"><svg class="size-4" viewBox="0 0 16 16" fill="none" stroke="currentColor"><path d="M2 13Q3 3 13 3" stroke-width="1.500"/><path d="M1 12H4V15H1ZM4 4H7V7H4ZM11 1H14V4H11Z"/></svg>三点画弧<svg class="ml-1 h-[3px] w-[5px]"><use href="#caret"/></svg></button>
      <span class="relative ml-2 flex w-[54px]"><select disabled aria-label="画弧方式" class="h-[17px] w-full appearance-none border border-white bg-[#efede2]"><option></option></select><svg class="pointer-events-none absolute top-px right-px h-[15px] w-3"><use href="#dropOff"/></svg></span>
      <button disabled class="ml-[6px]"><svg class="size-4" viewBox="0 0 16 16"><path d="M1.500 3.500H14.500V12.500H1.500Z" fill="#cbc8b9" stroke="currentColor"/></svg>矩形</button>
      <span class="mx-[6px] h-5 w-px bg-[#c5c2b0]"></span>
      <button disabled><svg class="size-4" viewBox="0 0 16 16" fill="none" stroke="currentColor"><path d="M1.500 1.500H14.500V14.500H1.500Z" stroke-width="2" stroke-dasharray="2 1"/><path d="M8 3.500V6.500M8 9.500V12.500M3.500 8H6.500M9.500 8H12.500M6.500 5 8 3.500 9.500 5M6.500 11 8 12.500 9.500 11"/></svg>智能布置<svg class="h-[3px] w-[5px]"><use href="#caret"/></svg></button>
      <button aria-label="更多" class="mb-2 ml-auto text-black"><svg class="h-[6px] w-2"><use href="#more"/></svg></button>
    </div>

    <div class="flex h-[26px] shrink-0 items-center border-b border-[#d5d2c2] pr-1 pl-px [&>button]:flex [&>button]:items-center [&>button]:gap-[3px]">
      <span class="mr-[6px] h-4 border-l-2 border-dotted border-[#a8a797]"></span>
      <div class="flex gap-1 [&>span]:relative [&>span]:flex [&_select]:h-[17px] [&_select]:w-full [&_select]:appearance-none [&_select]:bg-white [&_select]:pb-px [&_select]:pl-px [&_svg]:pointer-events-none [&_svg]:absolute [&_svg]:top-px [&_svg]:right-px [&_svg]:h-[15px] [&_svg]:w-3">
        <span class="w-14"><select aria-label="楼层"><option>基础层</option></select><svg><use href="#drop"/></svg></span>
        <span class="w-[68px]"><select aria-label="构件类别"><option>基础</option></select><svg><use href="#drop"/></svg></span>
        <span class="w-[68px]"><select aria-label="构件类型"><option>垫层</option></select><svg><use href="#drop"/></svg></span>
        <span class="w-[68px]"><select aria-label="构件名称"><option></option></select><svg><use href="#drop"/></svg></span>
        <span class="w-[71px]"><select aria-label="分层"><option>分层1</option></select><svg><use href="#drop"/></svg></span>
      </div>
      <span class="ml-1 h-5 w-px bg-[#c5c2b0]"></span>
      <button class="ml-[3px] h-[22px] w-[51px] rounded-xs border border-[#6f8fb5] bg-[#fbfbf8] pl-[3px]"><svg class="size-4" viewBox="0 0 16 16"><path d="M0.500 1.500H9.500V9.500H0.500Z" fill="#e8edf6" stroke="#8a94a8"/><path d="M1 2H9V4H1Z" fill="#707888"/><path d="M6 5H14L16 7V14.500H3Z" fill="#f2b42c"/><path d="M2 12 6 7 10 11 13 8V11L10 14 7 11 4 13Z" fill="#fbe8b8" stroke="#7a5a1e"/></svg>属性</button>
      <button aria-label="更多" class="mb-2 ml-auto"><svg class="h-[6px] w-2"><use href="#more"/></svg></button>
      <div class="ml-[3px] flex h-full w-[124px] items-center border-l border-[#b5b2a0] pl-[3px] [&>button]:flex [&>button]:items-center [&>button]:gap-[3px]">
        <span class="mr-[6px] h-4 border-l-2 border-dotted border-[#a8a797]"></span>
        <button><svg class="size-4" viewBox="0 0 16 16"><path d="M4.500 1V15M11.500 1V15M1 4.500H15M1 11.500H15" stroke="#7f8fc0"/><path d="M1 15 15 1" stroke="#d0382c"/><circle cx="4.500" cy="11.500" r="1.500" fill="#3f8a3a"/><circle cx="11.500" cy="4.500" r="1.500" fill="#3f8a3a"/></svg>两点</button>
        <button class="ml-2"><svg class="size-4" viewBox="0 0 16 16"><path d="M4.500 1V15M11.500 1V15" stroke="#7f8fc0"/><path d="M1 5.500H15M1 10.500H15" stroke="#7f8fc0"/><path d="M1 7.500H15" stroke="#e8a098"/></svg>平行</button>
        <button aria-label="更多" class="mb-2 ml-auto"><svg class="h-[6px] w-2"><use href="#more"/></svg></button>
      </div>
    </div>

    <div class="flex min-h-0 flex-1">
      <!-- Edit tools -->
      <div class="flex w-[26px] shrink-0 flex-col items-center pt-1 pb-[3px] [&>button]:flex [&>button]:flex-col [&>button]:items-center [&>button>span]:w-3 [&>button>span]:leading-3 [&>button>span]:whitespace-normal [&>hr]:my-[3px] [&>hr]:w-5 [&>hr]:border-[#c0bdac] [&>button>svg:first-child]:my-[3px] [&>button>svg:first-child]:size-4">
        <span class="h-[2px] w-[18px] border-t-2 border-dotted border-[#a8a797]"></span>
        <button aria-label="删除图元"><svg viewBox="0 0 16 16"><path d="M15 0 10 6" stroke="#e0b860" stroke-width="2.500"/><path d="M3 11 8 5 12 8 8 13Z" fill="#c9d3ea" stroke="#6b7fae"/><circle cx="7" cy="11" r="2" fill="#d873a8"/><path d="M0 14.500H12" stroke="#53689c" stroke-width="1.500"/></svg></button>
        <hr>
        <button aria-label="复制图元"><svg viewBox="0 0 16 16" fill="none" stroke="#8492b8"><circle cx="4" cy="4" r="3.500"/><circle cx="10.500" cy="11.500" r="3"/><circle cx="12.500" cy="11.500" r="3"/><path d="M9 2 14 5.500M14 1.500V6H10" stroke="#5b85d0"/></svg></button>
        <button aria-label="镜像"><svg viewBox="0 0 16 16" fill="none" stroke="#5f86d0"><path d="M5.500 1.500V14.500H0.500ZM10.500 1.500V14.500H15.500ZM8 1V15"/></svg></button>
        <hr>
        <button aria-label="移动"><svg viewBox="0 0 16 16" fill="none" stroke="#7186b8"><path d="M8 1V15M1 8H15M6 3.500 8 1 10 3.500M6 12.500 8 15 10 12.500M3.500 6 1 8 3.500 10M12.500 6 15 8 12.500 10"/></svg></button>
        <button aria-label="旋转"><svg viewBox="0 0 16 16"><path d="M12 4Q15 9 11 12.500Q7 14.500 4 11.500Q2 8 4 5" fill="none" stroke="#8aa5dc" stroke-width="2.500"/><path d="M2 1.500H8.500V8Z" fill="#8aa5dc"/></svg></button>
        <hr>
        <button class="pb-1"><svg viewBox="0 0 16 16" fill="#eef3fb" stroke="#6f8fc4"><path d="M11.500 1.500H14.500V14.500H11.500ZM0.500 6.500H5.500V9.500H0.500Z"/><path d="M7 6.500H11M7 9.500H11" stroke-dasharray="1 1"/></svg><span>延伸</span></button>
        <button class="pb-1"><svg viewBox="0 0 16 16" fill="#eef3fb" stroke="#6f8fc4"><path d="M6.500 1.500H9.500V14.500H6.500Z"/><path d="M0 6.500H6M0 9.500H6M10 6.500H16M10 9.500H16"/></svg><span>修剪</span></button>
        <hr>
        <button class="pb-1"><svg viewBox="0 0 16 16" fill="#fff" stroke="#7b95cc"><path d="M0.500 4.500H6M3 2 0.500 4.500 3 7M10 4.500H15.500M13 2 15.500 4.500 13 7" fill="none"/><path d="M1.500 10.500H14.500V13.500H1.500ZM6.500 10V14M9.500 10V14" stroke="#8a98b8"/></svg><span>打断</span><svg class="h-[6px] w-[3px]" viewBox="0 0 3 6"><path d="M3 0V6L0 3Z"/></svg></button>
        <button class="pb-1"><svg viewBox="0 0 16 16" fill="#fff" stroke="#7b95cc"><path d="M0 4.500H5.500M3 2 5.500 4.500 3 7M10.500 4.500H16M13 2 10.500 4.500 13 7" fill="none"/><path d="M1.500 10.500H14.500V13.500H1.500ZM8 10V14" stroke="#8a98b8"/></svg><span>合并</span></button>
        <button class="pb-1"><svg viewBox="0 0 16 16"><path d="M1.500 4.500H14.500V13.500H1.500Z" fill="#e6eefc" stroke="#4f78d8"/><path d="M0 4.500H3M13 4.500H16M0 13.500H3M13 13.500H16" stroke="#4f78d8" stroke-width="2"/><path d="M3 12 10 5" stroke="#8a6a4a" stroke-width="1.500"/><path d="M9 6 14 1" stroke="#d8a878" stroke-width="3"/></svg><span>分割</span></button>
        <hr>
        <button class="pb-1"><svg viewBox="0 0 16 16" fill="none"><path d="M2 1V15" stroke="#6b7fae" stroke-width="3"/><path d="M4 3.500H13M7 1 4.500 3.500 7 6" stroke="#4f78d8"/><path d="M4.500 8.500H13.500V14.500H4.500Z" stroke="#d0485c"/><path d="M4.500 7.500H11.500V12.500H4.500Z" stroke="#4f78d8"/></svg><span>对齐</span><svg class="h-[6px] w-[3px]" viewBox="0 0 3 6"><path d="M3 0V6L0 3Z"/></svg></button>
        <button class="pb-1"><svg viewBox="0 0 16 16"><path d="M5 5Q8-1 11 5L15 10Q15 14.500 11 14H5Q1 14.500 1 10Z" fill="#e8eefa" stroke="#8492b8"/><path d="M8 4 11.500 10.500H4.500Z" fill="#fff" stroke="#e0786c" stroke-width="1.500" stroke-linejoin="round"/></svg><span>偏移</span></button>
        <button aria-label="更多" class="mt-auto ml-[10px]"><svg class="m-0! h-2! w-[6px]!" viewBox="0 0 6 8" fill="none" stroke="#000" stroke-width="1.500"><path d="M0.500 0.500 3 3 5.500 0.500M0.500 4.500 3 7 5.500 4.500"/></svg></button>
      </div>

      <!-- Model view: axis grid, cushions, dimensions -->
      <svg class="h-full min-w-0 flex-1 bg-black" viewBox="430 127 593 558" preserveAspectRatio="xMinYMin slice" role="img" aria-label="绘图区">
        <g fill="#757500">
          <path d="M533 241H614V270H533ZM533 362H614V391H533ZM533 502H614V531H533ZM533 642H614V672H533Z"/>
          <path d="M729 216H758V296H729ZM729 336H758V416H729ZM729 476H758V557H729ZM729 617H758V685H729Z"/>
          <path d="M788 362H817V391H788ZM788 502H817V531H788ZM788 642H817V672H788ZM780 417H859V446H780ZM780 563H859V593H780Z"/>
          <path d="M782 226H851L859 241 826 299H808L774 241Z"/><path d="M831 685Q834 682 837 685Z"/>
        </g>
        <g fill="none" stroke="#008000" shape-rendering="crispEdges">
          <path d="M458.500 253V685M502.500 253V685M859.500 253V685M903.500 253V685"/>
          <path d="M546.500 127V253M569.500 127V253M747.500 127V253M805.500 127V253M815.500 127V253"/>
          <path d="M430 253.500H948M430 376.500H948M430 516.500H948M430 657.500H948"/>
          <path d="M546 165.500H816M546 209.500H816M569 224.500H689M759 224.500H812"/>
        </g>
        <g fill="none" stroke="#008000">
          <path d="M540 172 552 160M810 171 822 159M540 215 552 203M563 215 575 203M741 215 753 203M800 215 812 203M810 215 822 203M563 230 575 218M610 230 622 218M683 230 695 218M753 230 765 218M806 224 812 218"/>
          <path d="M496 247 509 260M496 370 509 383M496 510 509 523M496 651 509 664M853 247 866 260M853 370 866 383M853 510 866 523M853 651 866 664M897 247 910 260M452 247 465 260"/>
        </g>
        <g fill="none" stroke="#800000" shape-rendering="crispEdges"><path d="M616.500 253V685M688.500 253V685M759.500 253V685"/></g>
        <g fill="none" stroke="#f00" shape-rendering="crispEdges"><path d="M546.500 253V685M546 376.500H817M546 516.500H817M546 657.500H817M569.500 516V685M747.500 516V685M805.500 516V685M815.500 516V685"/></g>
        <g fill="none" stroke="#008000" shape-rendering="crispEdges"><path d="M569.500 253V516M747.500 253V516M805.500 253V516M815.500 253V516"/></g>
        <g fill="#e6e6e6" class="font-['Noto_Sans',sans-serif] text-lg">
          <text x="542" y="146">1</text><text x="565" y="146">2</text><text x="743" y="146">4</text><text x="802" y="146">5</text><text x="813" y="146">6</text>
          <text x="438" y="259">M</text><text x="439" y="382">L</text><text x="439" y="522">K</text><text x="439" y="662">J</text>
          <text x="956" y="259">M</text><text x="957" y="382">L</text><text x="957" y="522">K</text><text x="957" y="662">J</text>
          <text x="666" y="167">9220</text><text x="547" y="210">800</text><text x="644" y="210">6080</text><text x="762" y="210">2000</text><text x="799" y="210">340</text>
          <text x="578" y="230">1590</text><text x="614" y="230">4080</text><text x="768" y="230">1590</text>
          <text transform="translate(503 330) rotate(-90)">4200</text><text transform="translate(503 462) rotate(-90)">4800</text><text transform="translate(503 602) rotate(-90)">4800</text>
          <text transform="translate(870 330) rotate(-90)">4200</text><text transform="translate(870 462) rotate(-90)">4800</text><text transform="translate(870 602) rotate(-90)">4800</text>
          <text x="542" y="677" fill="#c8c8f0">1</text><text x="566" y="677" fill="#b8b8e8">2</text><text x="743" y="677" fill="#8a8ad8">4</text><text x="802" y="677" fill="#a8a8e8">5</text><text x="812" y="677">6</text>
        </g>
        <g fill="none" stroke="#008000">
          <circle cx="546" cy="140" r="12"/><circle cx="570" cy="140" r="12"/><circle cx="747" cy="140" r="12"/><circle cx="805" cy="140" r="12"/><circle cx="816" cy="140" r="12"/>
          <circle cx="546" cy="671" r="12"/><circle cx="570" cy="671" r="12"/><circle cx="747" cy="671" r="12"/><circle cx="805" cy="671" r="12"/><circle cx="816" cy="671" r="12"/>
          <circle cx="443" cy="253" r="12"/><circle cx="443" cy="376" r="12"/><circle cx="443" cy="516" r="12"/><circle cx="443" cy="657" r="12"/>
          <circle cx="960" cy="253" r="12"/><circle cx="960" cy="376" r="12"/><circle cx="960" cy="516" r="12"/><circle cx="960" cy="657" r="12"/>
        </g>
        <path d="M485 628V590" stroke="#0f0" stroke-width="4"/><path d="M485 581 489 593H481Z" fill="#0f0"/><path d="M494 583 498.500 588 503 583M498.500 588V593" fill="none" stroke="#0f0"/>
        <path d="M487 630H523" stroke="#f00" stroke-width="4"/><path d="M534 630 522 626V634Z" fill="#f00"/><path d="M522 609 531 619M531 609 522 619" stroke="#f00"/>
        <circle cx="485" cy="630" r="4" fill="#0080ff"/><path d="M472 625.500H480L472 634.500H480" fill="none" stroke="#0080ff"/>
      </svg>
    </div>

    <!-- Offset and snap toolbar -->
    <div class="flex h-[27px] shrink-0 items-center border-t border-white pl-px text-[#aca899] [&_label]:flex [&_label]:items-center [&_input[type=text]]:h-[17px] [&_input[type=text]]:border [&_input[type=text]]:border-white [&_input[type=text]]:text-right [&_input[type=text]]:font-['Liberation_Mono',monospace] [&_input[type=text]]:text-[10px]">
      <span class="mr-[6px] h-4 border-l-2 border-dotted border-[#a8a797]"></span>
      <span class="relative flex w-14"><select disabled aria-label="偏移方式" class="h-[17px] w-full appearance-none border border-white bg-[#efede2] pb-px text-[#aca899] opacity-100"><option>不偏移</option></select><svg class="pointer-events-none absolute top-px right-px h-[15px] w-3"><use href="#dropOff"/></svg></span>
      <span class="mx-1 h-5 w-px bg-[#c5c2b0]"></span>
      <label class="gap-[3px]"><small>X=</small><span class="relative flex w-14"><input type="text" disabled value="0" class="w-full pr-4"><svg class="absolute top-px right-0 h-[15px] w-[13px]"><use href="#spin"/></svg></span><small>mm</small></label>
      <label class="ml-[6px] gap-[3px]"><small>Y=</small><span class="relative flex w-14"><input type="text" disabled value="0" class="w-full pr-4"><svg class="absolute top-px right-0 h-[15px] w-[13px]"><use href="#spin"/></svg></span><small>mm</small></label>
      <span class="mr-[3px] ml-1 h-5 w-px bg-[#c5c2b0]"></span>
      <label class="gap-[6px]"><input type="checkbox" disabled class="size-[13px] appearance-none border border-[#cac8bb] bg-white">旋转</label>
      <span class="relative ml-[6px] flex w-[66px]"><input type="text" disabled aria-label="旋转角度" value="0.000" class="w-full pr-[18px]"><svg class="absolute top-px right-0 h-[15px] w-[13px]"><use href="#spin"/></svg></span><span class="mb-1 ml-[3px]">°</span>
      <div class="ml-auto flex h-full w-[228px] items-center gap-2 border-l border-[#b5b2a0] pl-[3px] [&>button]:flex [&>button]:items-center [&>button]:gap-[3px]">
        <span class="-mr-[2px] h-4 border-l-2 border-dotted border-[#a8a797]"></span>
        <button disabled><svg class="size-4" viewBox="0 0 16 16"><path d="M0 2H15V5H6V15H3V5H0Z" fill="#c2bfaf"/><path d="M7 6V14L9.500 12 11 15 13 14 11.500 11H14Z" fill="#dedbcd" stroke="currentColor"/></svg>正交</button>
        <button disabled><svg class="size-4" viewBox="0 0 16 16"><path d="M1 1 15 15M15 1 1 15" stroke="currentColor"/><path d="M6 6H10V10H6Z" fill="currentColor"/></svg>交点</button>
        <button disabled><svg class="size-4" viewBox="0 0 16 16"><path d="M0 13.500H16M12.500 2V13" stroke="currentColor"/><path d="M11 11H14V15H11Z" fill="currentColor"/></svg>垂点</button>
        <button disabled><svg class="size-4" viewBox="0 0 16 16"><path d="M0 8.500H16" stroke="currentColor"/><path d="M6 6H11V11H6Z" fill="currentColor"/></svg>中点</button>
        <button aria-label="更多" class="mr-1 mb-2 ml-auto text-black"><svg class="h-[6px] w-2"><use href="#more"/></svg></button>
      </div>
    </div>
  </section>
</main>

<!-- Status bar -->
<footer class="flex h-[26px] shrink-0 items-center border-t border-b-4 border-t-[#9d9a89] border-b-[#2d7de6] bg-linear-to-b from-[#dcd9c8] to-[#ece9d8] to-20% pt-px [&>span]:flex [&>span]:h-4 [&>span]:items-center [&>span]:border-r [&>span]:border-[#b5b2a0] [&>span]:pl-[2px]">
  <span class="w-[149px] pl-px!"><small>X=-2009 Y=41060</small></span>
  <span class="w-[79px]">层高<small>:1.67m</small></span>
  <span class="w-[121px]">建筑底标高<small>:-1.7m</small></span>
  <span class="w-[50px]"><small>0</small></span>
  <span class="w-[250px]"></span>
  <span class="min-w-0 flex-1"></span>
  <span class="w-[71px] border-r-0!"><small>476.2FPS</small></span>
</footer>
</body>
</html>
